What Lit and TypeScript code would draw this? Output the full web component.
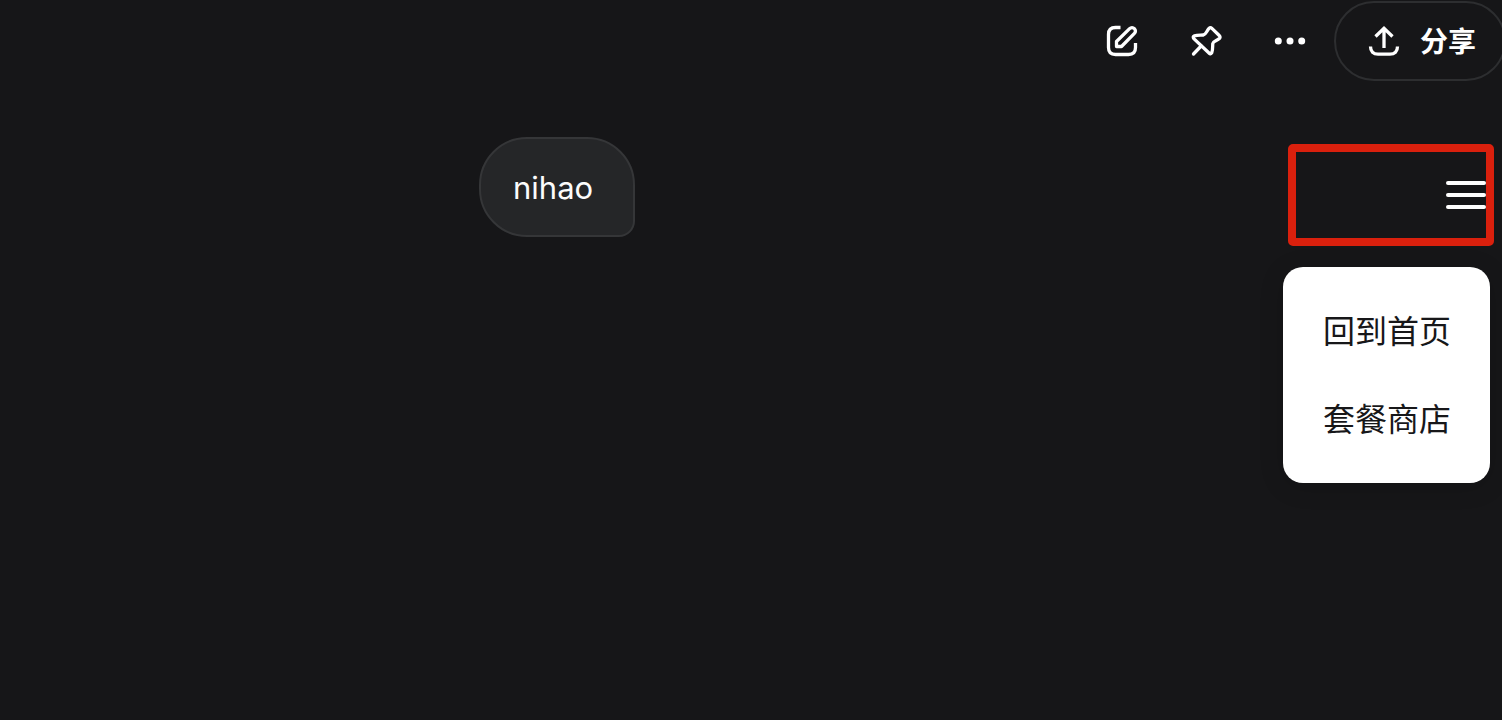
import { LitElement, html, css } from "lit";
import { customElement, property } from "lit/decorators.js";

@customElement("chat-toolbar")
class ChatToolbar extends LitElement {
  static styles = css`
    :host {
      display: flex;
      justify-content: flex-end;
      gap: 4px;
      padding-top: 1px;
      margin-right: -4px;
    }
    button {
      display: flex;
      align-items: center;
      justify-content: center;
      box-sizing: border-box;
      height: 80px;
      margin: 0;
      padding: 0;
      border: 0;
      background: none;
      color: #fff;
      font: inherit;
      cursor: pointer;
    }
    .icon {
      width: 80px;
    }
    .share {
      gap: 18px;
      padding: 0 28px 0 30px;
      border: 2px solid #2d2e30;
      border-radius: 40px;
      font-size: 28px;
      font-weight: 700;
      line-height: 40px;
    }
    .label {
      padding-top: 2px;
    }
    svg {
      display: block;
      flex: none;
      width: 36px;
      height: 36px;
      fill: none;
      stroke: currentColor;
      stroke-width: 3.3;
      stroke-linejoin: round;
    }
    .dots {
      fill: currentColor;
      stroke: none;
    }
  `;

  render() {
    return html`
      <button class="icon" aria-label="新建聊天">
        <svg viewBox="0 0 36 36">
          <path d="M16.5 4.5H11.5Q4.5 4.5 4.5 11.5V24.5Q4.5 31.5 11.5 31.5H24.5Q31.5 31.5 31.5 24.5V20" />
          <path d="M12.5 23.5V18.5L25.6 5.6C27 4.2 29 4.2 30.4 5.6S31.8 9 30.4 10.4L17.5 23.5Z" />
        </svg>
      </button>
      <button class="icon" aria-label="置顶">
        <svg viewBox="0 0 36 36" stroke-linecap="round">
          <path d="M21 5.4Q22.4 4 23.9 5.4L31 12.2Q32.8 14 31.4 15.5C29 17.6 25.2 18.2 24.8 20.5C24.5 23 25 26.6 23.8 29.6Q22.6 31.7 21 30L5.8 15.6Q4.4 13.6 6.4 12.9C9.5 12 13 12.3 15.3 12C18 11.6 18.4 8.2 21 5.4Z" />
          <path d="M13.2 23L5.5 31" />
        </svg>
      </button>
      <button class="icon" aria-label="更多">
        <svg class="dots" viewBox="0 0 36 36">
          <circle cx="6.3" cy="18" r="3.5" />
          <circle cx="18" cy="18" r="3.5" />
          <circle cx="29.7" cy="18" r="3.5" />
        </svg>
      </button>
      <button class="share">
        <svg viewBox="0 0 36 36" aria-hidden="true">
          <path stroke-linejoin="miter" d="M18 25V5M9.5 13.5L18 5.2L26.5 13.5" />
          <path d="M4.5 23.5C4.5 28.5 7.5 31.2 12 31.2H24C28.5 31.2 31.5 28.5 31.5 23.5" />
        </svg>
        <span class="label">分享</span>
      </button>
    `;
  }
}

@customElement("chat-message")
class ChatMessage extends LitElement {
  @property() text = "";

  static styles = css`
    :host {
      display: block;
    }
    .bubble {
      margin: 0;
      padding: 25px 40px 23px 32px;
      border: 2px solid #353638;
      border-radius: 48px 48px 16px 48px;
      background: #252628;
      color: #fcfcfc;
      font-size: 31px;
      line-height: 48px;
    }
  `;

  render() {
    return html`<p class="bubble">${this.text}</p>`;
  }
}

@customElement("side-menu")
class SideMenu extends LitElement {
  @property({ attribute: false }) items: string[] = [];

  static styles = css`
    :host {
      display: flex;
      flex-direction: column;
      align-items: flex-end;
      gap: 21px;
    }
    .frame {
      display: flex;
      align-items: center;
      justify-content: flex-end;
      box-sizing: border-box;
      width: 206px;
      height: 102px;
      margin-right: 8px;
      border: 8px solid #da200d;
      border-radius: 5px;
    }
    .toggle {
      display: flex;
      flex-direction: column;
      gap: 8px;
      margin: 0;
      padding: 0;
      border: 0;
      background: none;
      cursor: pointer;
    }
    .line {
      width: 40px;
      height: 4px;
      border-radius: 2px;
      background: #fff;
    }
    .menu {
      display: flex;
      flex-direction: column;
      margin-right: 12px;
      padding: 21px 0 19px;
      border-radius: 20px;
      background: #fff;
      box-shadow: 0 4px 24px rgba(0, 0, 0, 0.15);
    }
    .item {
      padding: 20px 39px 20px 40px;
      color: #171719;
      font-size: 32px;
      line-height: 48px;
      text-decoration: none;
    }
  `;

  render() {
    return html`
      <div class="frame">
        <button class="toggle" aria-label="菜单" aria-expanded="true">
          <span class="line"></span>
          <span class="line"></span>
          <span class="line"></span>
        </button>
      </div>
      <nav class="menu">
        ${this.items.map((item) => html`<a class="item" href="#">${item}</a>`)}
      </nav>
    `;
  }
}

@customElement("app-root")
class AppRoot extends LitElement {
  private menuItems = ["回到首页", "套餐商店"];

  static styles = css`
    :host {
      display: block;
      box-sizing: border-box;
      min-height: 100vh;
      overflow: hidden;
      background: #161618;
      font-family: Inter, "Noto Sans CJK SC", sans-serif;
    }
    .content {
      display: flex;
      align-items: flex-start;
      justify-content: space-between;
      padding-top: 56px;
    }
    .message {
      margin-left: 479px;
    }
    .side {
      padding-top: 7px;
    }
  `;

  render() {
    return html`
      <chat-toolbar></chat-toolbar>
      <main class="content">
        <chat-message class="message" text="nihao"></chat-message>
        <side-menu class="side" .items=${this.menuItems}></side-menu>
      </main>
    `;
  }
}
